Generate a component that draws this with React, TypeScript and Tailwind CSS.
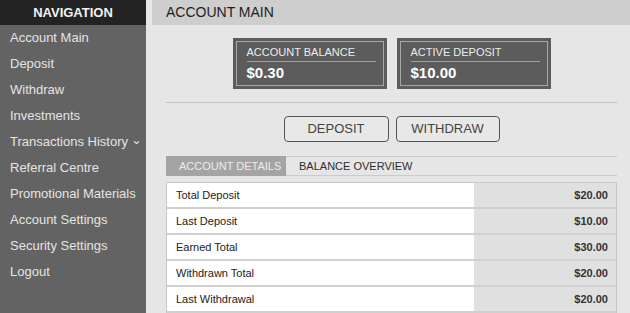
import React from "react";

const navItems = [
  "Account Main",
  "Deposit",
  "Withdraw",
  "Investments",
  "Transactions History",
  "Referral Centre",
  "Promotional Materials",
  "Account Settings",
  "Security Settings",
  "Logout",
];

const rows = [
  ["Total Deposit", "$20.00"],
  ["Last Deposit", "$10.00"],
  ["Earned Total", "$30.00"],
  ["Withdrawn Total", "$20.00"],
  ["Last Withdrawal", "$20.00"],
];

function Card({ label, value }: { label: string; value: string }) {
  return (
    <div className="w-[154px] h-[51px] bg-[#5c5c5c] p-[3px]">
      <div className="h-full border border-[#a8a8a8] pl-[10px] pr-[7px] pt-[4px]">
        <div className="border-b border-[#a0a0a0] pb-[2px] text-[11px] leading-[13px] text-[#ececec]">
          {label}
        </div>
        <div className="mt-[2px] text-[15px] leading-[18px] font-bold text-white">{value}</div>
      </div>
    </div>
  );
}

export default function App() {
  return (
    <div
      className="flex w-[630px] h-[313px] overflow-hidden bg-[#e6e6e6]"
      style={{ fontFamily: '"Liberation Sans", Arial, sans-serif' }}
    >
      <aside className="w-[146px] shrink-0 bg-[#636363] h-full">
        <div className="h-[25px] bg-[#232323] flex items-center justify-center text-[13px] font-bold text-[#f2f2f2]">
          NAVIGATION
        </div>
        <ul>
          {navItems.map((item) => (
            <li
              key={item}
              className="h-[26px] flex items-center pl-[10px] text-[13px] text-[#e4e4e4]"
            >
              {item}
              {item === "Transactions History" && (
                <svg width="7" height="5" viewBox="0 0 7 5" className="ml-[5px] mt-[1px]">
                  <path d="M1 1.5 L3.5 3.5 L6 1.5" stroke="#e4e4e4" strokeWidth="1.2" fill="none" />
                </svg>
              )}
            </li>
          ))}
        </ul>
      </aside>
      <main className="flex-1 flex flex-col">
        <div className="ml-[6px] h-[25px] bg-[#cecece] flex items-center pl-[14px] text-[14px] text-[#1e1e1e]">
          ACCOUNT MAIN
        </div>
        <div className="pl-[20px] pr-[13px]">
          <div className="flex justify-center gap-[10px] pt-[13px]">
            <Card label="ACCOUNT BALANCE" value="$0.30" />
            <Card label="ACTIVE DEPOSIT" value="$10.00" />
          </div>
          <div className="mt-[13px] border-t border-[#c4c4c4]" />
          <div className="flex justify-center gap-[7px] mt-[13px]">
            <button className="w-[105px] h-[26px] rounded-[4px] border border-[#555] bg-[#e8e8e8] text-[13px] text-[#444]">
              DEPOSIT
            </button>
            <button className="w-[104px] h-[26px] rounded-[4px] border border-[#555] bg-[#e8e8e8] text-[13px] text-[#444]">
              WITHDRAW
            </button>
          </div>
          <div className="mt-[14px] flex h-[20px] border-t border-b border-[#cbcbcb]">
            <div className="w-[120px] bg-[#a4a4a4] flex items-center pl-[13px] text-[11px] text-[#ececec] -mt-px -mb-px">
              ACCOUNT DETAILS
            </div>
            <div className="flex items-center pl-[13px] text-[11px] text-[#2e2e2e]">
              BALANCE OVERVIEW
            </div>
          </div>
          <div className="mt-[6px] border-t border-l border-r border-[#c8c8c8]">
            {rows.map(([label, value]) => (
              <div key={label} className="flex h-[26px] border-b-2 border-[#d0d0d0]">
                <div className="flex-1 bg-white flex items-center pl-[9px] text-[11px] text-[#222]">
                  {label}
                </div>
                <div className="w-[142px] bg-[#e0e0e0] flex items-center justify-end pr-[8px] text-[11px] font-bold text-[#333]">
                  {value}
                </div>
              </div>
            ))}
          </div>
        </div>
      </main>
    </div>
  );
}
